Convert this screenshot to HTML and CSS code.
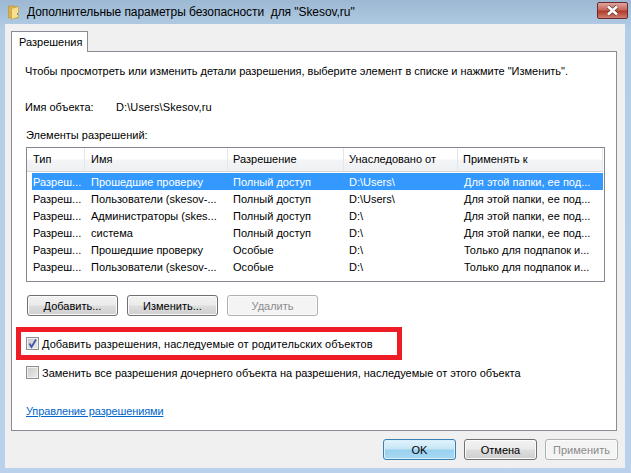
FILE: index.html
```html
<!DOCTYPE html>
<html lang="ru">
<head>
<meta charset="utf-8">
<title>Дополнительные параметры безопасности</title>
<link rel="stylesheet" href="styles.css">
</head>
<body>
<div class="window">
  <div class="titlebar">
    <svg class="folder" width="13" height="15" viewBox="0 0 13 15">
      <path d="M0.5 1 H7 L8 2 H10 V13 H0.5 Z" fill="#d9b24a" stroke="#b5912e" stroke-width="0.6"/>
      <path d="M3.5 3.5 L10.5 1.5 V12 L3.5 14.5 Z" fill="#f6e08e" stroke="#c09a38" stroke-width="0.6"/>
      <path d="M9 8 h1 v2 h-1 Z" fill="#5a9bb8"/>
    </svg>
    <span class="title">Дополнительные параметры безопасности&nbsp; для "Skesov,ru"</span>
    <div class="close">
      <svg width="15" height="11" viewBox="0 0 15 11">
        <path d="M3 1.5 L12 9.5 M12 1.5 L3 9.5" stroke="#5e3a3a" stroke-width="4"/>
        <path d="M3 1.5 L12 9.5 M12 1.5 L3 9.5" stroke="#fff" stroke-width="2.6"/>
      </svg>
    </div>
  </div>
  <div class="client">
    <div class="tab">Разрешения</div>
    <div class="panel">
      <p class="intro">Чтобы просмотреть или изменить детали разрешения, выберите элемент в списке и нажмите "Изменить".</p>
      <div class="objname"><span class="objlabel">Имя объекта:</span><span class="objpath">D:\Users\Skesov,ru</span></div>
      <div class="listlabel">Элементы разрешений:</div>
      <div class="list">
        <div class="head">
          <span class="c1">Тип</span><span class="c2">Имя</span><span class="c3">Разрешение</span><span class="c4">Унаследовано от</span><span class="c5">Применять к</span>
        </div>
        <div class="row selected"><span class="c1">Разреш...</span><span class="c2">Прошедшие проверку</span><span class="c3">Полный доступ</span><span class="c4">D:\Users\</span><span class="c5">Для этой папки, ее под...</span></div>
        <div class="row"><span class="c1">Разреш...</span><span class="c2">Пользователи (skesov-...</span><span class="c3">Полный доступ</span><span class="c4">D:\Users\</span><span class="c5">Для этой папки, ее под...</span></div>
        <div class="row"><span class="c1">Разреш...</span><span class="c2">Администраторы (skes...</span><span class="c3">Полный доступ</span><span class="c4">D:\</span><span class="c5">Для этой папки, ее под...</span></div>
        <div class="row"><span class="c1">Разреш...</span><span class="c2">система</span><span class="c3">Полный доступ</span><span class="c4">D:\</span><span class="c5">Для этой папки, ее под...</span></div>
        <div class="row"><span class="c1">Разреш...</span><span class="c2">Прошедшие проверку</span><span class="c3">Особые</span><span class="c4">D:\</span><span class="c5">Только для подпапок и...</span></div>
        <div class="row"><span class="c1">Разреш...</span><span class="c2">Пользователи (skesov-...</span><span class="c3">Особые</span><span class="c4">D:\</span><span class="c5">Только для подпапок и...</span></div>
      </div>
      <div class="listbtns">
        <button class="btn">Добавить...</button>
        <button class="btn">Изменить...</button>
        <button class="btn disabled">Удалить</button>
      </div>
      <div class="redbox">
        <span class="check checked"><svg width="11" height="11" viewBox="0 0 11 11"><path d="M2.5 5.5 L4.5 9 L9 1.5" fill="none" stroke="#3d56a8" stroke-width="1.8"/></svg></span>
        <span class="label-inherit">Добавить разрешения, наследуемые от родительских объектов</span>
      </div>
      <div class="replace">
        <span class="check"></span>
        <span class="label-replace">Заменить все разрешения дочернего объекта на разрешения, наследуемые от этого объекта</span>
      </div>
      <a class="link" href="#">Управление разрешениями</a>
    </div>
    <div class="footer">
      <button class="btn wide default">OK</button>
      <button class="btn wide">Отмена</button>
      <button class="btn wide disabled">Применить</button>
    </div>
  </div>
</div>
</body>
</html>
```
FILE: styles.css
```css
* { box-sizing: border-box; }
html, body { margin: 0; padding: 0; }
body {
  width: 631px;
  height: 473px;
  overflow: hidden;
  font-family: "Liberation Sans", "DejaVu Sans", sans-serif;
  font-size: 11px;
  color: #000;
  background: #b9d1ea;
}
.window {
  height: 473px;
  display: flex;
  flex-direction: column;
  padding: 0 6px 5px 5px;
  background: linear-gradient(to bottom, #9db8d2 0, #b3cde6 30px, #b9d1ea 100%);
}
.titlebar {
  height: 24px;
  flex: none;
  display: flex;
  align-items: center;
  gap: 6px;
  padding-left: 3px;
}
.title { font-size: 12px; flex: 1; white-space: nowrap; letter-spacing: -0.06px; }
.close {
  width: 31px;
  height: 17px;
  margin: -4px -3px 0 0;
  display: flex;
  align-items: center;
  justify-content: center;
  border: 1px solid #6b2a2f;
  border-radius: 2px;
  background: linear-gradient(to bottom, #dca69e 0, #c8665a 45%, #b23a28 55%, #cf7d6e 100%);
}
.client {
  flex: 1;
  display: flex;
  flex-direction: column;
  padding: 7px 8px 0 6px;
  background: #f0f0f0;
}
.tab {
  align-self: flex-start;
  width: 77px;
  height: 21px;
  margin-bottom: -1px;
  position: relative;
  z-index: 1;
  padding: 4px 0 0 7px;
  background: #fff;
  border: 1px solid #898c95;
  border-bottom: 0;
}
.panel {
  height: 380px;
  flex: none;
  display: flex;
  flex-direction: column;
  align-items: flex-start;
  padding: 0 11px 0 14px;
  background: #fff;
  border: 1px solid #898c95;
}
.intro { margin: 13px 0 0 -1px; white-space: nowrap; line-height: 13px; letter-spacing: -0.02px; }
.objname { margin: 23px 0 0 -1px; display: flex; line-height: 13px; }
.objlabel { width: 91px; }
.objpath { letter-spacing: 0.1px; }
.listlabel { margin-top: 15px; line-height: 13px; }
.list {
  width: 579px;
  height: 135px;
  margin-top: 5px;
  border: 1px solid #828790;
  padding: 0 1px 0 5px;
  background: #fff;
}
.head, .row { display: grid; align-items: center; white-space: nowrap; }
.head {
  grid-template-columns: 58px 143px 116px 114px 145px;
  height: 24px;
  margin: 0 0 1px -5px;
  background: linear-gradient(to bottom, #fff 0, #fff 45%, #f3f4f6 55%, #eef0f3 100%);
  border-bottom: 1px solid #d5d5d5;
}
.head span { height: 23px; line-height: 23px; padding-left: 5px; border-right: 1px solid #e3e6ea; }
.head .c1, .head .c2 { padding-left: 6px; }
.row { grid-template-columns: 58px 142px 116px 115px 1fr; height: 17px; }
.row span { padding-left: 1px; }
.row.selected { background: #3399ff; color: #fff; }
.listbtns { display: flex; gap: 9px; margin: 13px 0 0 1px; }
.btn {
  width: 91px;
  height: 21px;
  padding: 0;
  font: inherit;
  color: #000;
  border: 1px solid #707070;
  border-radius: 3px;
  background: linear-gradient(to bottom, #f2f2f2 0, #ebebeb 48%, #dddddd 52%, #cfcfcf 100%);
  box-shadow: inset 0 0 0 1px #fbfbfb;
}
.btn.disabled {
  color: #8b8b8b;
  border-color: #adb2b5;
  background: #f4f4f4;
}
.btn.wide { width: 73px; }
.btn.default {
  border-color: #3c7fb1;
  background: linear-gradient(to bottom, #e5f4fc 0, #c4e5f6 48%, #98d1ef 52%, #a9d9f2 100%);
  box-shadow: inset 0 0 0 1px #d8f0fb;
}
.redbox {
  width: 386px;
  height: 33px;
  margin: 11px 0 0 -10px;
  padding-left: 5px;
  display: flex;
  align-items: center;
  gap: 3px;
  border: 5px solid #ee1c25;
  white-space: nowrap;
}
.label-inherit { letter-spacing: 0.08px; }
.label-replace { letter-spacing: 0px; }
.replace {
  display: flex;
  align-items: center;
  gap: 3px;
  margin: 6px 0 0 0;
  white-space: nowrap;
}
.check {
  width: 13px;
  height: 13px;
  flex: none;
  display: flex;
  align-items: center;
  justify-content: center;
  border: 1px solid #8e8f8f;
  background: linear-gradient(135deg, #c9c9c9 0, #ececec 100%);
  box-shadow: inset 0 0 0 1px #f0f0f0;
}
.link { margin-top: 26px; color: #0066cc; line-height: 13px; letter-spacing: -0.13px; }
.footer { display: flex; justify-content: flex-end; gap: 8px; padding-top: 8px; margin-right: -1px; }
```
